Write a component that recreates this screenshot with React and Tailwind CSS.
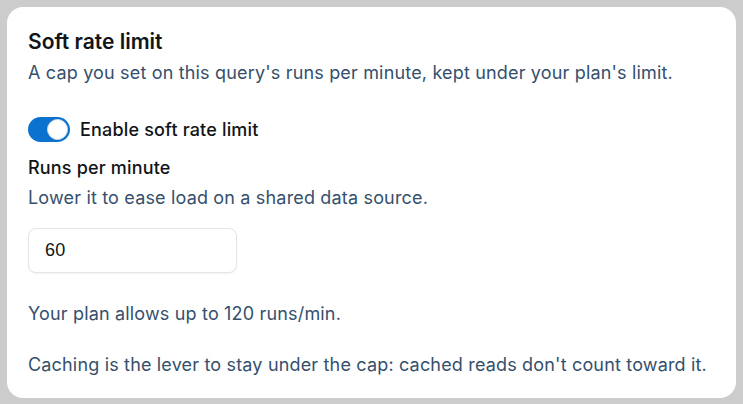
import React, { useState } from "react";

export default function App() {
  const [enabled, setEnabled] = useState(true);
  const [runs, setRuns] = useState("60");

  return (
    <div className="min-h-screen bg-[#cccccc] p-[7px]" style={{ fontFamily: "Inter, 'Noto Sans', sans-serif" }}>
      <div className="flex flex-col rounded-[16px] bg-white px-[21px] pt-[21px] pb-[20px] tracking-[0.17px]">
        <h2 className="text-[21px] leading-[28px] font-semibold tracking-normal text-[#111418]">Soft rate limit</h2>
        <p className="mt-[3px] text-[18px] leading-[27px] text-[#35506d]">
          A cap you set on this query's runs per minute, kept under your plan's limit.
        </p>

        <label className="mt-[30px] flex items-center gap-[10px] cursor-pointer">
          <button
            type="button"
            role="switch"
            aria-checked={enabled}
            onClick={() => setEnabled(!enabled)}
            className={`relative flex h-[25px] w-[42px] shrink-0 items-center rounded-full px-[2px] ${
              enabled ? "justify-end bg-[#0b72d0]" : "justify-start bg-[#c4c9d0]"
            }`}
          >
            <span className="block h-[21px] w-[21px] rounded-full border border-[#d6dbe1] bg-white" />
          </button>
          <span className="text-[18px] leading-[27px] font-medium text-[#111418]">Enable soft rate limit</span>
        </label>

        <div className="mt-[11px] text-[18px] leading-[27px] font-medium text-[#111418]">Runs per minute</div>
        <p className="mt-[3px] text-[18px] leading-[27px] text-[#35506d]">
          Lower it to ease load on a shared data source.
        </p>

        <input
          value={runs}
          onChange={(e) => setRuns(e.target.value)}
          className="mt-[17px] h-[45px] w-[209px] rounded-[8px] border border-[#e3e5e8] bg-white px-[16px] text-[18px] text-[#111418] shadow-[0_1px_2px_rgba(0,0,0,0.05)] outline-none"
          style={{ fontFamily: "'Liberation Sans', Arial, sans-serif" }}
        />

        <p className="mt-[27px] text-[18px] leading-[27px] text-[#35506d]">Your plan allows up to 120 runs/min.</p>
        <p className="mt-[24px] text-[18px] leading-[27px] text-[#35506d]">
          Caching is the lever to stay under the cap: cached reads don't count toward it.
        </p>
      </div>
    </div>
  );
}
